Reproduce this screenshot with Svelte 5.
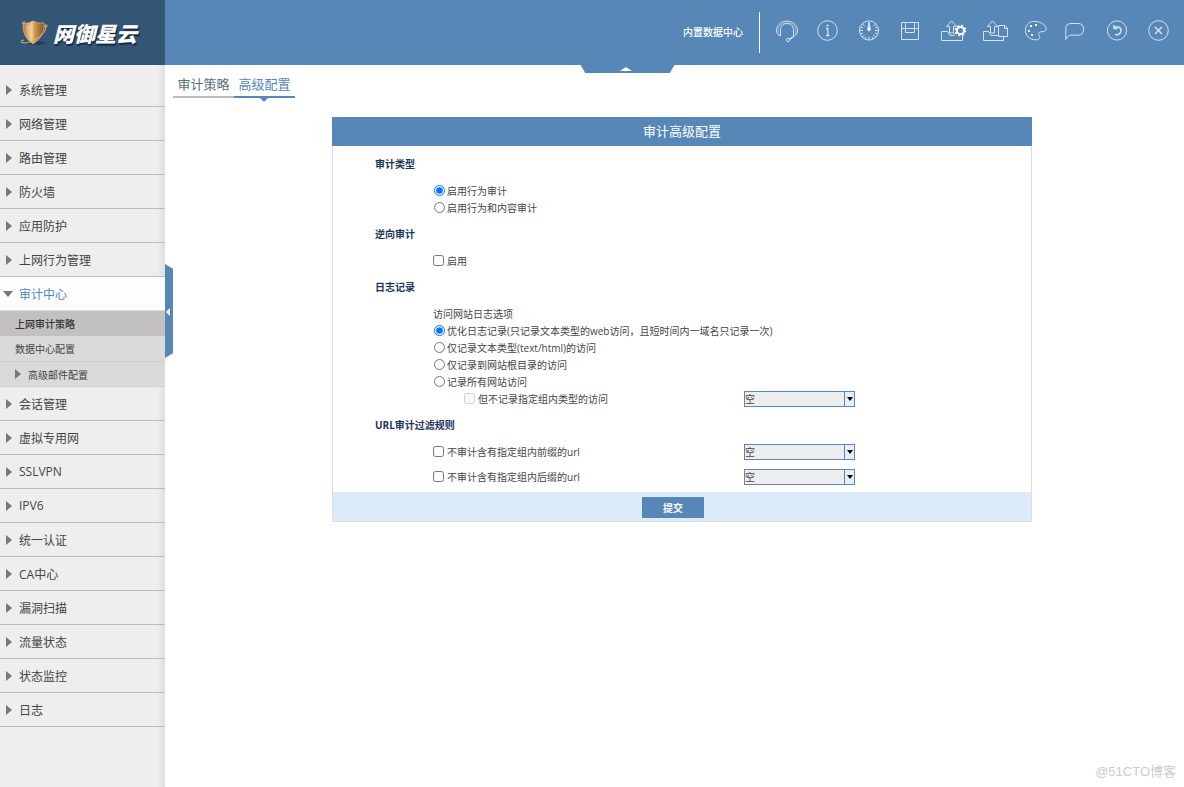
<script>
    const menu = [
        { label: '系统管理' },
        { label: '网络管理' },
        { label: '路由管理' },
        { label: '防火墙' },
        { label: '应用防护' },
        { label: '上网行为管理' },
        {
            label: '审计中心',
            children: [
                { label: '上网审计策略', current: true },
                { label: '数据中心配置' },
                { label: '高级邮件配置', nested: true }
            ]
        },
        { label: '会话管理' },
        { label: '虚拟专用网' },
        { label: 'SSLVPN' },
        { label: 'IPV6' },
        { label: '统一认证' },
        { label: 'CA中心' },
        { label: '漏洞扫描' },
        { label: '流量状态' },
        { label: '状态监控' },
        { label: '日志' }
    ];

    const logOptions = [
        { value: 'optimized', label: '优化日志记录(只记录文本类型的web访问，且短时间内一域名只记录一次)' },
        { value: 'text', label: '仅记录文本类型(text/html)的访问' },
        { value: 'root', label: '仅记录到网站根目录的访问' },
        { value: 'all', label: '记录所有网站访问' }
    ];

    let opened = $state('审计中心');
    let auditType = $state('behavior');
    let reverseAudit = $state(false);
    let logMode = $state('optimized');
    let skipGroup = $state(false);
    let skipPrefix = $state(false);
    let skipSuffix = $state(false);

    function toggle(label) {
        opened = opened === label ? '' : label;
    }
</script>

{#snippet groupSelect(label, disabled)}
    <span class="group_select">
        <select aria-label={label} {disabled}>
            <option>空</option>
        </select>
    </span>
{/snippet}

<div class="page">
    <header>
        <a class="logo" href="#home">
            <svg width="30" height="28" viewBox="0 0 30 28" aria-hidden="true">
                <defs>
                    <linearGradient id="gold" x1="0" y1="0" x2="1" y2="0">
                        <stop offset="0" stop-color="#b4783c" />
                        <stop offset="0.4" stop-color="#f0cd98" />
                        <stop offset="0.55" stop-color="#d39a54" />
                        <stop offset="1" stop-color="#85501f" />
                    </linearGradient>
                </defs>
                <ellipse cx="17" cy="24" rx="10" ry="2" fill="#243f5b" />
                <path d="M4 4 Q9 5 14 2 Q19 5 25 4 Q26 18 14 25 Q3 18 4 4Z" fill="url(#gold)" stroke="#d9ae70" stroke-width="0.8" />
                <path d="M14 4 Q10 7 7 7 Q7 16 14 21Z" fill="#f3cf94" opacity="0.4" />
                <path d="M26 7 Q29 13 17 20 Q7 26 2 23 Q2 21 5 21" fill="none" stroke="#dfb75c" stroke-width="1" />
                <path d="M3 2 L6 5 M3 5 L6 2 M25 7 h4 M27 5 v4" stroke="#dfc794" stroke-width="0.7" />
            </svg>
            <span>网御星云</span>
        </a>

        <div class="toolbar">
            <a class="center" href="#data">内置数据中心</a>
            <button aria-label="在线支持">
                <svg viewBox="0 0 41 26">
                    <path d="M14.5 18 C9.5 16.5 9.5 10 13 6.5 C17 2 25 2 29 6.5 C32.5 10 32.5 16.5 27.5 18.5 V11.5 C27 3.5 15 3.5 14.5 11.5Z" />
                    <path d="M12.2 17 V11 C13 3 29 3 29.8 11 V17" stroke-width="0.5" />
                    <path d="M27.5 18.5 L23.5 21.3" stroke-width="1.5" />
                    <circle cx="22" cy="22" r="1.6" />
                </svg>
            </button>
            <button aria-label="关于">
                <svg viewBox="0 0 41 26">
                    <circle cx="20.5" cy="12.5" r="9.8" />
                    <path d="M19 10.5 H20.8 V17 M19 17.5 H22.5" stroke-width="1.3" />
                    <circle class="solid" cx="20.5" cy="7.5" r="0.7" />
                </svg>
            </button>
            <button aria-label="系统时间">
                <svg viewBox="0 0 41 26">
                    <circle cx="21" cy="12.5" r="9.6" />
                    <path d="M21 18.5 V22 M11.5 12.5 H15 M27 12.5 H30.5 M16.7 16.8 L14.3 19.2 M25.3 16.8 L27.7 19.2 M14.3 5.8 L16.7 8.2 M27.7 5.8 L25.3 8.2 M18 19 L17.2 21 M24 19 L24.8 21 M12.5 9 L15 10 M29.5 9 L27 10 M12.5 16 L15 15 M29.5 16 L27 15" />
                    <path class="solid" d="M21 4 L22.3 11 Q22.3 13 21 13 Q19.7 13 19.7 11Z" />
                </svg>
            </button>
            <button aria-label="保存">
                <svg viewBox="0 0 41 26">
                    <path d="M12.5 4.5 H29.5 V21.5 H12.5Z M12.5 10.5 H29.5 M16.5 4.5 V14.5 H25.5 V4.5" />
                </svg>
            </button>
            <button aria-label="导出配置">
                <svg viewBox="0 0 41 26">
                    <path d="M17.5 13.5 H11.5 V22.5 H32.5 V18 M17.5 13.5 L20 17.5 H24 L26 14.5" />
                    <path d="M19.5 15 V8.5 H16.5 L21.5 2.8 L26.5 8.5 H23.5 V15Z" />
                    <circle cx="30.5" cy="12.5" r="3.6" stroke-width="2" stroke="#fff" />
                    <circle cx="30.5" cy="12.5" r="5" stroke-width="1.6" stroke="#fff" stroke-dasharray="2 1.93" />
                </svg>
            </button>
            <button aria-label="导出文件">
                <svg viewBox="0 0 41 26">
                    <path d="M17.5 13.5 H12.5 V22.5 H32.5 V19 M17.5 13.5 L20 17.5 H27" />
                    <path d="M19.5 15 V8.5 H16.5 L21.5 2.8 L26.5 8.5 H23.5 V15Z" />
                    <path d="M27.5 7.5 H34 L36.5 10 V18.5 H27.5Z M33.5 7.5 V10.5 H36.5" />
                </svg>
            </button>
            <button aria-label="换肤">
                <svg viewBox="0 0 41 26">
                    <path d="M24 3.5 C17 2.5 13.5 7 13.5 12.5 C13.5 18 18 21.8 23 21.8 C27 21.8 28.5 20.5 27.5 18.5 C26 16 26.5 14 29 13.8 C32 13.8 34.5 13 34.2 10.5 C33.5 6.5 29 4 24 3.5Z" />
                    <path class="solid" d="M18 7h2v2h-2z M23 6h2v2h-2z M16 12h2v2h-2z M19 16h2v2h-2z" stroke="none" />
                </svg>
            </button>
            <button aria-label="消息">
                <svg viewBox="0 0 41 26">
                    <path d="M12.8 21.5 V10.5 Q12.8 5.5 18 5.5 H25 Q30.5 5.5 30.5 11.5 Q30.5 17.2 25 17.2 H17.5 Q14 17.5 12.8 21.5Z" />
                </svg>
            </button>
            <button aria-label="返回">
                <svg viewBox="0 0 41 26">
                    <circle cx="23" cy="12.5" r="9.6" />
                    <path d="M20 7 V10.5 H23.5 M20.2 10.2 C22 8 27 8.5 27 12.5 C27 16 24 17 21 16.5" stroke-width="1.5" />
                </svg>
            </button>
            <button aria-label="退出">
                <svg viewBox="0 0 41 26">
                    <circle cx="23.5" cy="12.5" r="9.8" />
                    <path d="M20 9 L27 16 M27 9 L20 16" stroke-width="1.5" />
                </svg>
            </button>
        </div>

        <button class="collapse_top" aria-label="收起顶部"></button>
    </header>

    <div class="body">
        <nav>
            <ul>
                {#each menu as item}
                    <li>
                        <button class="item" class:open={opened === item.label} onclick={() => toggle(item.label)}>
                            {item.label}
                        </button>
                        {#if item.children && opened === item.label}
                            <ul class="submenu">
                                {#each item.children as child}
                                    <li>
                                        <a href="#{child.label}" class:current={child.current} class:nested={child.nested}>{child.label}</a>
                                    </li>
                                {/each}
                            </ul>
                        {/if}
                    </li>
                {/each}
            </ul>
            <button class="collapse_side" aria-label="收起菜单"></button>
        </nav>

        <main>
            <div class="tabs">
                <a href="#policy">审计策略</a>
                <a href="#advanced" class="active">高级配置</a>
            </div>

            <form class="panel" onsubmit={(e) => e.preventDefault()}>
                <h2>审计高级配置</h2>

                <div class="sections">
                    <section>
                        <h3>审计类型</h3>
                        <label class="radio"><input type="radio" value="behavior" bind:group={auditType} />启用行为审计</label>
                        <label class="radio"><input type="radio" value="content" bind:group={auditType} />启用行为和内容审计</label>
                    </section>

                    <section>
                        <h3>逆向审计</h3>
                        <label><input type="checkbox" bind:checked={reverseAudit} />启用</label>
                    </section>

                    <section>
                        <h3>日志记录</h3>
                        <p>访问网站日志选项</p>
                        {#each logOptions as option}
                            <label class="radio"><input type="radio" value={option.value} bind:group={logMode} />{option.label}</label>
                        {/each}
                        <div class="row">
                            <label class="sub"><input type="checkbox" disabled={logMode !== 'all'} bind:checked={skipGroup} />但不记录指定组内类型的访问</label>
                            {@render groupSelect('类型组', !skipGroup)}
                        </div>
                    </section>

                    <section class="rules">
                        <h3>URL审计过滤规则</h3>
                        <div class="row">
                            <label><input type="checkbox" bind:checked={skipPrefix} />不审计含有指定组内前缀的url</label>
                            {@render groupSelect('前缀组', !skipPrefix)}
                        </div>
                        <div class="row">
                            <label><input type="checkbox" bind:checked={skipSuffix} />不审计含有指定组内后缀的url</label>
                            {@render groupSelect('后缀组', !skipSuffix)}
                        </div>
                    </section>
                </div>

                <div class="actions">
                    <button type="submit">提交</button>
                </div>
            </form>
        </main>
    </div>

    <div class="watermark">@51CTO博客</div>
</div>

<style>
    :global(body) {
        margin: 0;
        background: #fff;
    }

    .page {
        --blue: #5787b6;
        position: relative;
        display: flex;
        flex-direction: column;
        min-height: 100vh;
        font-family: "Open Sans", "Noto Sans CJK SC", sans-serif;
        font-size: 10px;
        color: #444;
    }

    button, select, input {
        font-family: inherit;
        margin: 0;
    }

    button {
        border: 0;
        padding: 0;
        background: none;
        cursor: pointer;
    }

    a {
        color: inherit;
        text-decoration: none;
    }

    ul {
        list-style: none;
        margin: 0;
        padding: 0;
    }

    /* Header */

    header {
        position: relative;
        display: flex;
        justify-content: space-between;
        height: 65px;
        background: var(--blue);
    }

    .logo {
        display: flex;
        align-items: center;
        gap: 4px;
        width: 165px;
        padding-left: 19px;
        box-sizing: border-box;
        background: #345676;
        color: #fff;
        font-size: 21px;
        font-weight: 900;
        font-style: italic;
        text-shadow: 1px 2px 1px #13283c;
        white-space: nowrap;
    }

    .toolbar {
        display: flex;
        align-items: center;
        padding-right: 8px;
    }

    .center {
        height: 41px;
        line-height: 41px;
        padding-right: 16px;
        margin-right: 6px;
        border-right: 1px solid #fff;
        color: #fff;
        font-weight: 500;
    }

    .toolbar svg {
        display: block;
        width: 41px;
        height: 26px;
        fill: none;
        stroke: #d5e2ef;
        stroke-width: 1;
    }

    .toolbar .solid {
        fill: #fff;
    }

    .toolbar button {
        padding-bottom: 3px;
    }

    .collapse_top {
        position: absolute;
        z-index: 1;
        top: 100%;
        left: 53%;
        width: 94px;
        height: 8px;
        transform: translateX(-50%);
        background: var(--blue);
        clip-path: polygon(0 0, 100% 0, 95% 100%, 5% 100%);
    }

    .collapse_top::after {
        content: '';
        position: absolute;
        left: 39px;
        top: 2px;
        border: 6px solid transparent;
        border-top: 0;
        border-bottom: 4px solid #fff;
    }

    /* Side menu */

    .body {
        flex-grow: 1;
        display: flex;
    }

    nav {
        position: relative;
        flex-shrink: 0;
        width: 165px;
        padding-top: 8px;
        box-sizing: border-box;
        background: linear-gradient(to left, #dfe2e2, #eee 8px);
    }

    .item {
        display: flex;
        align-items: center;
        width: 100%;
        height: 34px;
        padding-left: 6px;
        border-bottom: 1px solid #bbb;
        font-size: 12px;
        color: #444;
    }

    .item::before, .nested::before {
        content: '';
        border: 5px solid transparent;
        border-left: 6px solid #777;
        border-right: 0;
        margin-right: 7px;
    }

    .item.open {
        padding-left: 3px;
        background: #fdfdfd;
        border-bottom-color: #ddd;
        color: var(--blue);
    }

    .item.open::before {
        border: 5px solid transparent;
        border-top: 6px solid #777;
        border-bottom: 0;
        margin-right: 6px;
    }

    .submenu a {
        display: flex;
        align-items: center;
        height: 25px;
        padding-left: 15px;
        background: #dadada;
        border-bottom: 1px solid #cfcfcf;
        color: #444;
    }

    .submenu .current {
        background: #c2c0c0;
        border-bottom: 0;
        color: #333;
        font-weight: 500;
    }

    .submenu .nested {
        height: 24px;
    }

    .collapse_side {
        position: absolute;
        left: 100%;
        top: 199px;
        width: 8px;
        height: 94px;
        background: var(--blue);
        clip-path: polygon(0 0, 100% 5%, 100% 95%, 0 100%);
    }

    .collapse_side::after {
        content: '';
        position: absolute;
        left: 1px;
        top: 44px;
        border: 4px solid transparent;
        border-left: 0;
        border-right: 4px solid #fff;
    }

    /* Content */

    main {
        flex-grow: 1;
        padding-left: 8px;
    }

    .tabs {
        display: flex;
        padding-top: 7px;
    }

    .tabs a {
        position: relative;
        width: 61px;
        height: 24px;
        line-height: 24px;
        border-bottom: 2px solid #bbb;
        text-align: center;
        font-size: 13px;
        color: #5b6d7d;
    }

    .tabs .active {
        color: var(--blue);
        border-color: var(--blue);
    }

    .active::after {
        content: '';
        position: absolute;
        left: 26px;
        top: 26px;
        border: 4px solid transparent;
        border-top-color: var(--blue);
        border-bottom: 0;
    }

    .panel {
        margin: 19px 152px 0 159px;
        border: 1px solid #ddd;
        border-top: 0;
    }

    h2 {
        margin: 0 -1px;
        height: 29px;
        line-height: 29px;
        background: var(--blue);
        color: #fff;
        font-size: 13px;
        font-weight: 400;
        text-align: center;
    }

    .sections {
        padding: 10px 0 6px 42px;
        line-height: 17px;
    }

    section {
        padding: 0 0 9px 58px;
    }

    section:last-child {
        padding-bottom: 0;
    }

    h3 {
        margin: 0 0 10px -58px;
        font-size: 10px;
        font-weight: 700;
        color: #1d365c;
    }

    p {
        margin: 0;
    }

    label {
        display: flex;
        align-items: center;
        gap: 3px;
        height: 17px;
    }

    .radio {
        gap: 2px;
        padding-left: 1px;
    }

    label input {
        width: 11px;
        height: 11px;
        margin-bottom: 2px;
        flex-shrink: 0;
    }

    .row {
        display: grid;
        grid-template-columns: 52% 111px;
        align-items: start;
        height: 17px;
    }

    .rules .row + .row {
        margin-top: 8px;
    }

    .sub {
        padding-left: 31px;
    }

    .group_select {
        position: relative;
        display: flex;
        height: 16px;
    }

    .group_select::after {
        content: '';
        position: absolute;
        right: 2px;
        top: 6px;
        border: 3px solid transparent;
        border-top: 4px solid #000;
        border-bottom: 0;
        pointer-events: none;
    }

    select {
        appearance: none;
        width: 100%;
        height: 16px;
        padding: 0 12px 0 0;
        border: 1px solid #5f85c0;
        border-radius: 0;
        background: linear-gradient(to left, #e3effd 9px, #5f85c0 9px, #5f85c0 10px, #eee 10px);
        font-size: 10px;
        line-height: 14px;
        color: #444;
        opacity: 1;
    }

    .actions {
        display: flex;
        justify-content: center;
        padding: 5px 18px 3px 0;
        background: #dcebfa;
    }

    .actions button {
        width: 62px;
        height: 21px;
        background: var(--blue);
        color: #fff;
        font-size: 10px;
        font-weight: 700;
    }

    .watermark {
        position: absolute;
        right: 8px;
        bottom: 7px;
        font-family: "Liberation Sans", "Noto Sans CJK SC", sans-serif;
        font-size: 13px;
        line-height: 16px;
        color: #ccc;
    }
</style>
